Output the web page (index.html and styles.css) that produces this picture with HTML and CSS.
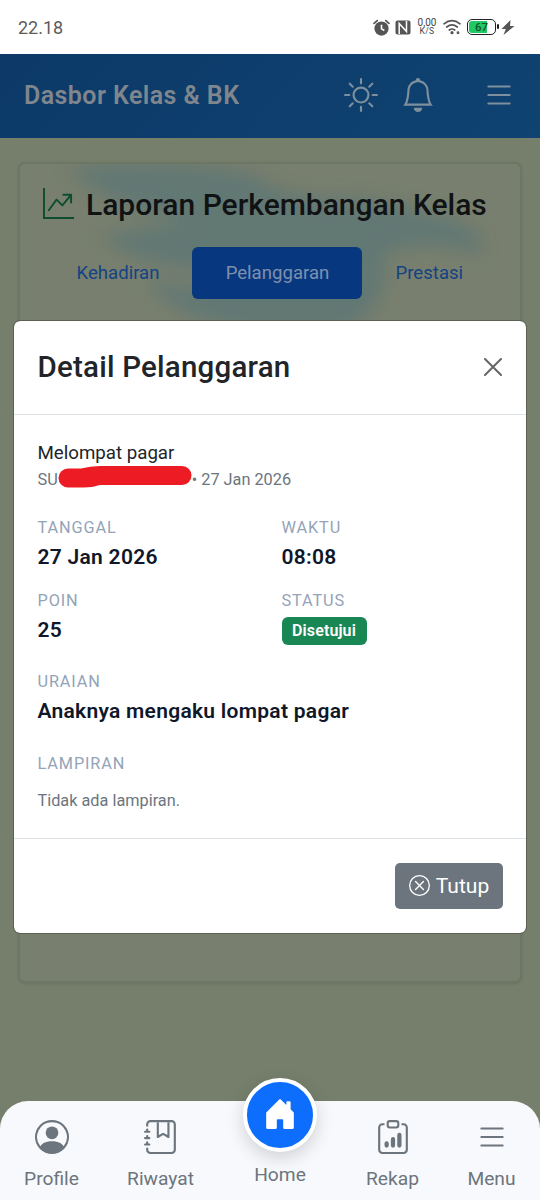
FILE: index.html
```html
<!DOCTYPE html>
<html lang="id">
<head>
<meta charset="utf-8">
<title>Dasbor Kelas &amp; BK</title>
<link rel="stylesheet" href="styles.css">
</head>
<body>
<div class="screen">
  <div class="status">
    <span class="clock">22.18</span>
    <div class="status-icons">
      <svg class="alarm" viewBox="0 0 16 16"><circle cx="8" cy="9" r="6.7" fill="#555"/><path d="M1 4.2 4 1.5M15 4.2 12 1.5" stroke="#555" stroke-width="1.6" stroke-linecap="round"/><path d="M8 5.5V9.3l2.7 1.5" fill="none" stroke="#fff" stroke-width="1.5"/></svg>
      <svg class="nfc" viewBox="0 0 16 15"><rect x=".5" y=".5" width="15" height="14" rx="2" fill="#555"/><path d="M4.2 14V3.5L11.5 11.5V1" fill="none" stroke="#fff" stroke-width="1.5"/></svg>
      <div class="speed"><span>0,00</span><small>K/S</small></div>
      <svg class="wifi" viewBox="0 0 18 16" fill="none" stroke="#555" stroke-width="1.7" stroke-linecap="round"><path d="M1 4.8Q9-1.6 17 4.8M3.7 8Q9 3.8 14.3 8M6.3 11Q9 9 11.7 11"/><circle cx="9" cy="13.7" r=".8"/><circle cx="15" cy="13.7" r=".6"/></svg>
      <div class="battery"><b>67</b></div>
      <svg class="bolt" viewBox="0 0 14 15"><path d="M9.5 0 .5 9h4.3L2.5 15 13.5 6H9z" fill="#555"/></svg>
    </div>
  </div>

  <header class="topbar">
    <h1>Dasbor Kelas &amp; BK</h1>
    <svg class="ic sun" viewBox="0 0 16 16"><path d="M8 11a3 3 0 1 1 0-6 3 3 0 0 1 0 6m0 1a4 4 0 1 0 0-8 4 4 0 0 0 0 8M8 0a.5.5 0 0 1 .5.5v2a.5.5 0 0 1-1 0v-2A.5.5 0 0 1 8 0m0 13a.5.5 0 0 1 .5.5v2a.5.5 0 0 1-1 0v-2A.5.5 0 0 1 8 13m8-5a.5.5 0 0 1-.5.5h-2a.5.5 0 0 1 0-1h2a.5.5 0 0 1 .5.5M3 8a.5.5 0 0 1-.5.5h-2a.5.5 0 0 1 0-1h2A.5.5 0 0 1 3 8m10.657-5.657a.5.5 0 0 1 0 .707l-1.414 1.415a.5.5 0 1 1-.707-.708l1.414-1.414a.5.5 0 0 1 .707 0m-9.193 9.193a.5.5 0 0 1 0 .707L3.05 13.657a.5.5 0 0 1-.707-.707l1.414-1.414a.5.5 0 0 1 .707 0m9.193 2.121a.5.5 0 0 1-.707 0l-1.414-1.414a.5.5 0 0 1 .707-.707l1.414 1.414a.5.5 0 0 1 0 .707M4.464 4.465a.5.5 0 0 1-.707 0L2.343 3.05a.5.5 0 1 1 .707-.707l1.414 1.414a.5.5 0 0 1 0 .708"/></svg>
    <svg class="ic bell" viewBox="0 0 16 16"><path d="M8 16a2 2 0 0 0 2-2H6a2 2 0 0 0 2 2M8 1.918l-.797.161A4 4 0 0 0 4 6c0 .628-.134 2.197-.459 3.742-.16.767-.376 1.566-.663 2.258h10.244c-.287-.692-.502-1.49-.663-2.258C12.134 8.197 12 6.628 12 6a4 4 0 0 0-3.203-3.92zM14.22 12c.223.447.481.801.78 1H1c.299-.199.557-.553.78-1C2.68 10.2 3 6.88 3 6c0-2.42 1.72-4.44 4.005-4.901a1 1 0 1 1 1.99 0A5 5 0 0 1 13 6c0 .88.32 4.2 1.22 6"/></svg>
    <svg class="ic list" viewBox="0 0 16 16"><path d="M2.5 12a.5.5 0 0 1 .5-.5h10a.5.5 0 0 1 0 1H3a.5.5 0 0 1-.5-.5m0-4a.5.5 0 0 1 .5-.5h10a.5.5 0 0 1 0 1H3a.5.5 0 0 1-.5-.5m0-4a.5.5 0 0 1 .5-.5h10a.5.5 0 0 1 0 1H3a.5.5 0 0 1-.5-.5"/></svg>
  </header>

  <main class="page">
    <section class="card">
      <svg class="map" viewBox="0 0 502 240" fill="#5f7775">
        <path d="M50 6Q150-6 235 12Q268 40 330 36Q400 42 455 66L466 94Q410 74 366 92Q372 150 322 170H240Q150 158 130 116Q190 136 210 108Q120 108 84 74Q130 64 170 60Q90 44 50 6Z"/>
      </svg>
      <h2 class="card-title">
        <svg viewBox="0 0 16 16"><path fill-rule="evenodd" d="M0 0h1v15h15v1H0zm10 3.5a.5.5 0 0 1 .5-.5h4a.5.5 0 0 1 .5.5v4a.5.5 0 0 1-1 0V4.9l-3.613 4.417a.5.5 0 0 1-.74.037L7.06 6.767l-3.656 5.027a.5.5 0 0 1-.808-.588l4-5.5a.5.5 0 0 1 .758-.06l2.609 2.61L13.445 4H10.5a.5.5 0 0 1-.5-.5"/></svg>
        <span>Laporan Perkembangan Kelas</span>
      </h2>
      <nav class="tabs"><a>Kehadiran</a><a class="active">Pelanggaran</a><a>Prestasi</a></nav>
    </section>
  </main>

  <div class="modal">
    <div class="modal-head">
      <h3>Detail Pelanggaran</h3>
      <svg viewBox="0 0 18 18"><path d="M1 1 17 17M17 1 1 17" stroke="#666" stroke-width="2" stroke-linecap="round"/></svg>
    </div>
    <div class="modal-body">
      <p class="name">Melompat pagar</p>
      <p class="meta"><span>SU</span><svg viewBox="0 0 134 22"><path d="M10 2.5H23Q32 0 42 0H124A9.5 9.5 0 0 1 124 19H42Q34 21.5 26 21.5H10A9.5 9.5 0 0 1 10 2.5Z" fill="#ed1c24"/></svg><span>• 27 Jan 2026</span></p>
      <div class="grid">
        <div><p class="label">TANGGAL</p><p class="value">27 Jan 2026</p></div>
        <div><p class="label">WAKTU</p><p class="value">08:08</p></div>
        <div><p class="label">POIN</p><p class="value">25</p></div>
        <div><p class="label">STATUS</p><span class="badge">Disetujui</span></div>
      </div>
      <p class="label uraian">URAIAN</p>
      <p class="value">Anaknya mengaku lompat pagar</p>
      <p class="label lampiran">LAMPIRAN</p>
      <p class="empty">Tidak ada lampiran.</p>
    </div>
    <div class="modal-foot">
      <button class="close-btn"><svg viewBox="0 0 16 16"><path d="M8 15A7 7 0 1 1 8 1a7 7 0 0 1 0 14m0 1A8 8 0 1 0 8 0a8 8 0 0 0 0 16"/><path d="M4.646 4.646a.5.5 0 0 1 .708 0L8 7.293l2.646-2.647a.5.5 0 0 1 .708.708L8.707 8l2.647 2.646a.5.5 0 0 1-.708.708L8 8.707l-2.646 2.647a.5.5 0 0 1-.708-.708L7.293 8 4.646 5.354a.5.5 0 0 1 0-.708"/></svg><span>Tutup</span></button>
    </div>
  </div>

  <nav class="bottom">
    <a class="profile"><svg viewBox="0 0 16 16"><path d="M11 6a3 3 0 1 1-6 0 3 3 0 0 1 6 0"/><path fill-rule="evenodd" d="M0 8a8 8 0 1 1 16 0A8 8 0 0 1 0 8m8-7a7 7 0 0 0-5.468 11.37C3.242 11.226 4.805 10 8 10s4.757 1.225 5.468 2.37A7 7 0 0 0 8 1"/></svg><span>Profile</span></a>
    <a class="history"><svg viewBox="0 0 16 16"><path d="M6 8V1h1v6.117L8.743 6.07a.5.5 0 0 1 .514 0L11 7.117V1h1v7a.5.5 0 0 1-.757.429L9 7.083 6.757 8.43A.5.5 0 0 1 6 8"/><path d="M3 0h10a2 2 0 0 1 2 2v12a2 2 0 0 1-2 2H3a2 2 0 0 1-2-2v-1h1v1a1 1 0 0 0 1 1h10a1 1 0 0 0 1-1V2a1 1 0 0 0-1-1H3a1 1 0 0 0-1 1v1H1V2a2 2 0 0 1 2-2"/><path d="M1 5v-.5a.5.5 0 0 1 1 0V5h.5a.5.5 0 0 1 0 1h-2a.5.5 0 0 1 0-1zm0 3v-.5a.5.5 0 0 1 1 0V8h.5a.5.5 0 0 1 0 1h-2a.5.5 0 0 1 0-1zm0 3v-.5a.5.5 0 0 1 1 0v.5h.5a.5.5 0 0 1 0 1h-2a.5.5 0 0 1 0-1z"/></svg><span>Riwayat</span></a>
    <a class="home"><i class="fab"><svg viewBox="0 0 16 16"><path d="M6.5 14.5v-3.505c0-.245.25-.495.5-.495h2c.25 0 .5.25.5.5v3.5a.5.5 0 0 0 .5.5h4a.5.5 0 0 0 .5-.5v-7a.5.5 0 0 0-.146-.354L13 5.793V2.5a.5.5 0 0 0-.5-.5h-1a.5.5 0 0 0-.5.5v1.293L8.354 1.146a.5.5 0 0 0-.708 0l-6 6A.5.5 0 0 0 1.5 7.5v7a.5.5 0 0 0 .5.5h4a.5.5 0 0 0 .5-.5"/></svg></i><span>Home</span></a>
    <a class="recap"><svg viewBox="0 0 16 16"><path d="M4 11a1 1 0 1 1 2 0v1a1 1 0 1 1-2 0zm6-4a1 1 0 1 1 2 0v5a1 1 0 1 1-2 0zM7 9a1 1 0 0 1 2 0v3a1 1 0 1 1-2 0z"/><path d="M4 1.5H3a2 2 0 0 0-2 2V14a2 2 0 0 0 2 2h10a2 2 0 0 0 2-2V3.5a2 2 0 0 0-2-2h-1v1h1a1 1 0 0 1 1 1V14a1 1 0 0 1-1 1H3a1 1 0 0 1-1-1V3.5a1 1 0 0 1 1-1h1z"/><path d="M9.5 1a.5.5 0 0 1 .5.5v1a.5.5 0 0 1-.5.5h-3a.5.5 0 0 1-.5-.5v-1a.5.5 0 0 1 .5-.5zm-3-1A1.5 1.5 0 0 0 5 1.5v1A1.5 1.5 0 0 0 6.5 4h3A1.5 1.5 0 0 0 11 2.5v-1A1.5 1.5 0 0 0 9.5 0z"/></svg><span>Rekap</span></a>
    <a class="menu"><svg viewBox="0 0 16 16"><path d="M2.5 12a.5.5 0 0 1 .5-.5h10a.5.5 0 0 1 0 1H3a.5.5 0 0 1-.5-.5m0-4a.5.5 0 0 1 .5-.5h10a.5.5 0 0 1 0 1H3a.5.5 0 0 1-.5-.5m0-4a.5.5 0 0 1 .5-.5h10a.5.5 0 0 1 0 1H3a.5.5 0 0 1-.5-.5"/></svg><span>Menu</span></a>
  </nav>
</div>
</body>
</html>
```
FILE: styles.css
```css
* { box-sizing: border-box; margin: 0; padding: 0; }
body { font-family: Roboto, sans-serif; color: #212529; }
svg { display: block; flex: none; }
.screen { position: relative; width: 540px; height: 1200px; overflow: hidden; background: #767f6c; display: flex; flex-direction: column; }

.status { height: 54px; flex: none; background: #fff; display: flex; justify-content: space-between; align-items: center; padding: 0 25px 0 18px; color: #5c5c5c; }
.clock { font-size: 18px; letter-spacing: 0; line-height: 20px; padding-top: 2px; }
.status-icons { display: flex; align-items: center; }
.alarm { width: 17px; height: 17px; margin-right: 5px; }
.nfc { width: 16px; height: 15px; margin-right: 6px; }
.speed { width: 20px; display: flex; flex-direction: column; align-items: center; font-size: 10px; line-height: 9px; margin-right: 6px; color: #444; }
.speed small { font-size: 8.5px; letter-spacing: .3px; }
.wifi { width: 18px; height: 16px; margin-right: 6px; }
.battery { position: relative; width: 29px; height: 16px; border: 1.5px solid #222; border-radius: 5px; background: linear-gradient(90deg, #1fc964 18px, #fff 18px) content-box; padding: 1px; text-align: center; margin-right: 5px; }
.battery::after { content: ""; position: absolute; right: -4px; top: 4px; width: 2px; height: 5px; background: #222; border-radius: 1px; }
.battery b { display: block; font-size: 11.5px; line-height: 12px; font-weight: 500; color: #15532d; }
.bolt { width: 14px; height: 15px; }

.topbar { height: 84px; flex: none; display: flex; align-items: center; padding: 0 24px; background: linear-gradient(135deg, #0c3968, #0f4371); color: #7f868d; }
.topbar h1 { font-size: 25px; letter-spacing: .43px; font-weight: 600; line-height: 30px; margin-right: auto; }
.ic { width: 34px; height: 34px; fill: #7e8f9e; margin-top: -3px; }
.bell { margin-left: 23px; }
.list { margin-left: 47px; }

.page { flex: 1; padding: 24px 18px; }
.card { position: relative; height: 821px; border: 2px solid #6d7665; border-radius: 7px; background: #787f6e; padding-top: 24px; overflow: hidden; box-shadow: 0 1px 3px rgba(0,0,0,.1); }
.map { position: absolute; left: -2px; top: -2px; width: 502px; height: 240px; filter: blur(9px); opacity: .85; }
.card-title { position: relative; display: flex; align-items: center; gap: 12px; padding-left: 23px; height: 34px; font-size: 30px; font-weight: 500; line-height: 34px; color: #101214; white-space: nowrap; }
.card-title svg { width: 31px; height: 31px; margin-top: -3px; fill: #0f4d31; }
.tabs { position: relative; display: flex; align-items: center; margin-top: 25px; padding-left: 23.5px; font-size: 18.6px; color: #134383; }
.tabs a { height: 52px; line-height: 52px; padding: 0 33px; }
.tabs .active { width: 170px; padding: 0; text-align: center; border-radius: 6px; background: #07377f; color: #7f8fae; }

.modal { position: absolute; left: 12.5px; top: 320px; width: 514.5px; height: 614px; border: 1px solid #5b6154; border-radius: 7px; background: #fff; background-clip: padding-box; display: flex; flex-direction: column; }
.modal-head { height: 94px; flex: none; border-bottom: 1px solid #dee2e6; display: flex; justify-content: space-between; align-items: center; padding: 0 24px 2px; }
.modal-head h3 { font-size: 29.5px; letter-spacing: .22px; font-weight: 500; line-height: 36px; }
.modal-head svg { width: 18px; height: 18px; }
.modal-body { height: 424px; flex: none; padding: 26px 24px 0; border-bottom: 1px solid #dee2e6; }
.name { font-size: 18.7px; line-height: 24px; }
.meta { display: flex; height: 28px; line-height: 29px; font-size: 16.3px; color: #6c757d; }
.meta svg { width: 134px; height: 22px; margin-top: 1px; }
.grid { display: grid; grid-template-columns: 244px 1fr; grid-auto-rows: 73px; margin-top: 23px; }
.label { font-size: 16.3px; line-height: 24px; letter-spacing: .88px; color: #94a3b8; }
.value { font-size: 21px; line-height: 34px; letter-spacing: .28px; font-weight: 600; color: #0f172a; }
.badge { display: block; width: 85px; height: 28px; margin-top: 4px; border-radius: 6px; background: #198754; color: #fff; font-size: 16px; letter-spacing: .1px; line-height: 27px; font-weight: 600; text-align: center; }
.uraian { margin-top: 8px; }
.lampiran { margin-top: 24px; }
.empty { margin-top: 13px; font-size: 16.3px; line-height: 24px; color: #6c757d; }
.modal-foot { flex: 1; display: flex; justify-content: flex-end; align-items: center; padding-right: 23px; }
.close-btn { display: flex; align-items: center; justify-content: center; gap: 6px; width: 108px; height: 46px; border: 0; border-radius: 5px; background: #6c757d; color: #fff; font: 400 21px Roboto, sans-serif; }
.close-btn svg { width: 21px; height: 21px; margin-top: -2px; fill: #fff; }

.bottom { position: absolute; left: 0; bottom: 0; width: 540px; height: 99px; border-radius: 28px 28px 0 0; background: #f8f9fc; display: flex; color: #6c757d; font-size: 19.2px; }
.bottom a { display: flex; flex-direction: column; align-items: center; padding-top: 19px; }
.bottom a > svg { width: 34px; height: 34px; fill: #6c757d; }
.bottom span { line-height: 24px; margin-top: 13px; }
.profile { width: 103px; }
.history { width: 115px; }
.home { width: 124px; }
.recap { width: 101px; }
.menu { width: 97px; }
.bottom .home { padding-top: 0; margin-top: -23px; }
.fab { width: 74px; height: 74px; flex: none; border: 4px solid #fff; border-radius: 50%; background: #0d6efd; box-shadow: 0 6px 18px rgba(0,0,0,.16); display: flex; align-items: center; justify-content: center; }
.fab svg { width: 34px; height: 34px; fill: #fff; margin-top: -3px; }
.bottom .home span { margin-top: 11px; }
```
